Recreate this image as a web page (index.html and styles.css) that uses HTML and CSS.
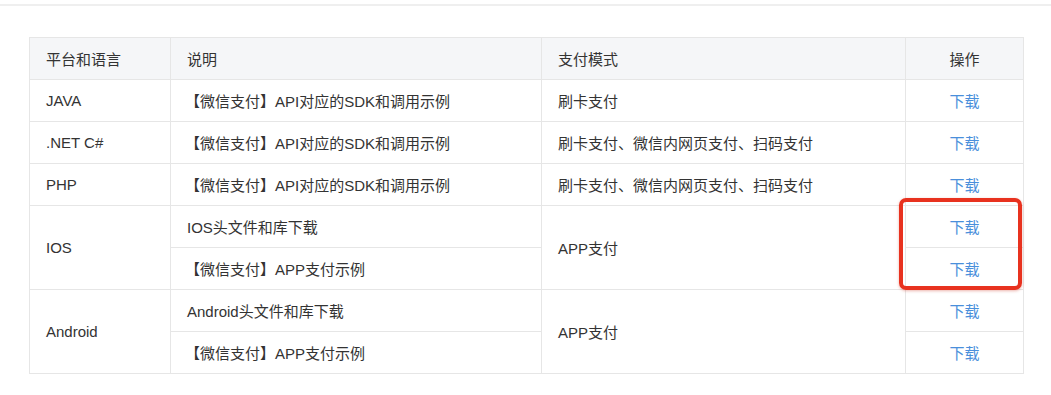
FILE: index.html
```html
<!DOCTYPE html>
<html lang="zh">
<head>
<meta charset="utf-8">
<link rel="stylesheet" href="styles.css">
</head>
<body>
<div class="topline"></div>
<div class="wrap">
  <table class="sdk">
    <colgroup>
      <col class="c1"><col class="c2"><col class="c3"><col class="c4">
    </colgroup>
    <thead>
      <tr><th>平台和语言</th><th>说明</th><th>支付模式</th><th class="center">操作</th></tr>
    </thead>
    <tbody>
      <tr><td>JAVA</td><td class="br">【微信支付】API对应的SDK和调用示例</td><td>刷卡支付</td><td class="center"><a href="#">下载</a></td></tr>
      <tr><td>.NET C#</td><td class="br">【微信支付】API对应的SDK和调用示例</td><td>刷卡支付、微信内网页支付、扫码支付</td><td class="center"><a href="#">下载</a></td></tr>
      <tr><td>PHP</td><td class="br">【微信支付】API对应的SDK和调用示例</td><td>刷卡支付、微信内网页支付、扫码支付</td><td class="center"><a href="#">下载</a></td></tr>
      <tr><td rowspan="2">IOS</td><td>IOS头文件和库下载</td><td rowspan="2">APP支付</td><td class="center"><a href="#">下载</a></td></tr>
      <tr><td class="br">【微信支付】APP支付示例</td><td class="center"><a href="#">下载</a></td></tr>
      <tr><td rowspan="2">Android</td><td>Android头文件和库下载</td><td rowspan="2">APP支付</td><td class="center"><a href="#">下载</a></td></tr>
      <tr><td class="br">【微信支付】APP支付示例</td><td class="center"><a href="#">下载</a></td></tr>
    </tbody>
  </table>
  <div class="highlight"></div>
</div>
</body>
</html>
```

FILE: styles.css
```css
html, body {
  margin: 0;
  padding: 0;
  background: #ffffff;
}
body {
  font-family: "Liberation Sans", "Noto Sans CJK SC", sans-serif;
  font-size: 15px;
  color: #333333;
}
.topline {
  margin-top: 4px;
  height: 2px;
  background: #efefef;
}
.wrap {
  position: relative;
  margin: 31px 0 0 29px;
  width: 995px;
}
.sdk {
  border-collapse: collapse;
  table-layout: fixed;
  width: 995px;
}
.c1 { width: 141px; }
.c2 { width: 371px; }
.c3 { width: 364px; }
.c4 { width: 118px; }
.sdk th, .sdk td {
  border: 1px solid #e6e6e6;
  height: 42px;
  padding: 0 16px;
  text-align: left;
  font-weight: normal;
  vertical-align: middle;
  box-sizing: border-box;
}
.sdk th {
  background: #f5f6f8;
}
.sdk td.br {
  padding-left: 14px;
}
.sdk .center {
  text-align: center;
}
.sdk a {
  color: #4a8fdb;
  text-decoration: none;
}
.highlight {
  position: absolute;
  left: 870px;
  top: 161px;
  width: 123px;
  height: 92px;
  box-sizing: border-box;
  border: 4px solid #e8321f;
  border-radius: 7px;
  box-shadow: 0 1px 3px rgba(200, 40, 20, 0.35);
}
```
